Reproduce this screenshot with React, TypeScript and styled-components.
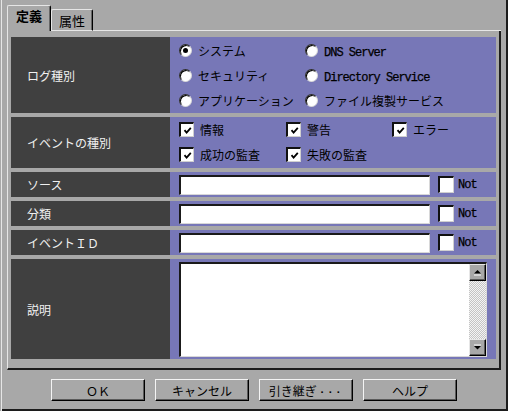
import React from "react";
import styled, { createGlobalStyle } from "styled-components";

const GRAY = "#a8a8a8";
const LIGHT = "#e6e6e6";
const DARK = "#1c1c1c";
const PURPLE = "#7777b7";
const LABEL_BG = "#404040";

const GlobalStyle = createGlobalStyle`
  html, body { margin: 0; padding: 0; background: ${GRAY}; }
  body {
    font-family: "Noto Sans CJK JP", "Noto Sans", sans-serif;
    font-size: 12px;
    color: #000;
  }
`;

const Window = styled.div`
  width: 508px;
  height: 411px;
  box-sizing: border-box;
  padding: 5px 7px 0 7px;
  background: ${GRAY};
  box-shadow: inset 1px 0 ${GRAY}, inset 2px 0 ${LIGHT}, inset -2px 0 ${DARK},
    inset 0 -2px ${DARK};
  display: flex;
  flex-direction: column;
`;

const TabStrip = styled.div`
  display: flex;
  align-items: flex-end;
  height: 26px;
`;

const Tab = styled.div<{ $active?: boolean; $w: number }>`
  box-sizing: border-box;
  width: ${(p) => p.$w}px;
  height: ${(p) => (p.$active ? 26 : 22)}px;
  border-top: 1px solid ${LIGHT};
  border-left: 1px solid ${LIGHT};
  border-right: 1px solid #000;
  border-bottom: ${(p) => (p.$active ? "none" : `1px solid ${LIGHT}`)};
  box-shadow: inset -1px 0 #666;
  border-radius: 2px 2px 0 0;
  display: flex;
  justify-content: center;
  align-items: ${(p) => (p.$active ? "flex-start" : "center")};
  padding-top: ${(p) => (p.$active ? 1 : 0)}px;
  font-size: 13px;
  line-height: 17px;
  font-weight: ${(p) => (p.$active ? 700 : 400)};
`;

const TabFiller = styled.div`
  flex: 1;
  height: 1px;
  background: ${LIGHT};
`;

const Panel = styled.div`
  border-left: 1px solid ${LIGHT};
  border-right: 2px solid ${DARK};
  border-bottom: 2px solid ${DARK};
  padding: 6px 3px 9px 3px;
`;

const Table = styled.div`
  display: grid;
  grid-template-columns: 159px 326px;
  grid-template-rows: 76px 51px 25px 25px 25px 100px;
  row-gap: 4px;
`;

const Label = styled.div`
  background: ${LABEL_BG};
  color: #f0f0f0;
  padding-left: 16px;
  display: flex;
  align-items: center;
  font-size: 12px;
`;

const Value = styled.div<{ $top?: number }>`
  background: ${PURPLE};
  padding-left: 9px;
  padding-top: ${(p) => p.$top ?? 0}px;
  display: flex;
  align-items: ${(p) => (p.$top !== undefined ? "flex-start" : "center")};
`;

const OptionGrid = styled.div<{ $cols: string }>`
  display: grid;
  grid-template-columns: ${(p) => p.$cols};
  grid-auto-rows: 25px;
  align-items: center;
`;

const Option = styled.label`
  display: flex;
  align-items: center;
  gap: 6px;
  white-space: nowrap;
  font-size: 12px;
`;

const Mono = styled.span`
  font-family: "Liberation Mono", "DejaVu Sans Mono", monospace;
  font-size: 12px;
  letter-spacing: -1px;
  font-weight: 400;
  -webkit-text-stroke: 0.25px #000;
`;

const RadioCircle = styled.span<{ $checked?: boolean }>`
  box-sizing: border-box;
  width: 13px;
  height: 13px;
  border-radius: 50%;
  background: #fff;
  border: 1px solid;
  border-color: #2a2a2a #d8d8d8 #d8d8d8 #2a2a2a;
  box-shadow: inset 1px 1px 0 #000;
  display: flex;
  align-items: center;
  justify-content: center;
  flex: none;
  &::after {
    content: "";
    display: ${(p) => (p.$checked ? "block" : "none")};
    width: 5px;
    height: 5px;
    border-radius: 50%;
    background: #000;
  }
`;

const CheckBox = styled.span<{ $size: number }>`
  box-sizing: border-box;
  width: ${(p) => p.$size}px;
  height: ${(p) => p.$size + (p.$size > 15 ? 1 : 0)}px;
  background: #fff;
  border-top: 2px solid #111;
  border-left: 2px solid #111;
  border-right: 1px solid #d0d0d0;
  border-bottom: 1px solid #d0d0d0;
  display: flex;
  align-items: center;
  justify-content: center;
  flex: none;
`;

const TextInput = styled.div`
  box-sizing: border-box;
  width: 251px;
  height: 20px;
  background: #fff;
  border-top: 2px solid #1a1a1a;
  border-left: 2px solid #1a1a1a;
  border-right: 1px solid #d8d8d8;
  border-bottom: 1px solid #d8d8d8;
  flex: none;
`;

const InputRow = styled.div`
  display: flex;
  align-items: center;
  gap: 8px;
`;

const NotOption = styled.label`
  display: flex;
  align-items: center;
  gap: 4px;
`;

const TextArea = styled.div`
  box-sizing: border-box;
  width: 308px;
  height: 95px;
  background: #fff;
  border-top: 2px solid #1a1a1a;
  border-left: 2px solid #1a1a1a;
  border-right: 1px solid #d8d8d8;
  border-bottom: 1px solid #d8d8d8;
  display: flex;
`;

const TextBody = styled.div`
  flex: 1;
`;

const ScrollBar = styled.div`
  width: 17px;
  display: flex;
  flex-direction: column;
`;

const ScrollButton = styled.div`
  box-sizing: border-box;
  height: 17px;
  background: ${GRAY};
  border-top: 1px solid ${LIGHT};
  border-left: 1px solid ${LIGHT};
  border-right: 1px solid #000;
  border-bottom: 1px solid #000;
  box-shadow: inset -1px -1px 0 #5a5a5a;
  display: flex;
  align-items: center;
  justify-content: center;
`;

const ScrollTrack = styled.div`
  flex: 1;
  background: repeating-conic-gradient(#c4c4c4 0 25%, #f4f4f4 0 50%) 0 0 / 2px
    2px;
`;

const ButtonRow = styled.div`
  display: flex;
  justify-content: center;
  gap: 10px;
  margin-top: 9px;
`;

const Button = styled.button`
  box-sizing: border-box;
  width: 94px;
  height: 22px;
  padding: 0;
  background: ${GRAY};
  border-top: 1px solid #f4f4f4;
  border-left: 1px solid #f4f4f4;
  border-right: 1px solid #000;
  border-bottom: 1px solid #000;
  box-shadow: inset -1px -1px 0 #5a5a5a;
  font-family: "Noto Sans CJK JP", "Noto Sans", sans-serif;
  font-size: 12px;
  color: #000;
  display: flex;
  align-items: center;
  justify-content: center;
`;

const ButtonMono = styled.span`
  font-family: "Liberation Mono", "DejaVu Sans Mono", monospace;
  font-size: 11px;
  font-weight: 700;
  letter-spacing: 1.5px;
  margin-left: 2px;
`;

const CheckMark = () => (
  <svg width="9" height="9" viewBox="0 0 9 9">
    <path d="M1.5 4.2 L3.6 6.6 L7.8 1.8" stroke="#000" strokeWidth="1.8" fill="none" />
  </svg>
);

const Radio = ({ checked, children }: { checked?: boolean; children: React.ReactNode }) => (
  <Option>
    <RadioCircle $checked={checked} />
    <span>{children}</span>
  </Option>
);

const Check = ({ children }: { children: React.ReactNode }) => (
  <Option>
    <CheckBox $size={15}>
      <CheckMark />
    </CheckBox>
    <span>{children}</span>
  </Option>
);

const FieldRow = () => (
  <InputRow>
    <TextInput />
    <NotOption>
      <CheckBox $size={16} />
      <Mono>Not</Mono>
    </NotOption>
  </InputRow>
);

export default function App() {
  return (
    <>
      <GlobalStyle />
      <Window>
        <TabStrip>
          <Tab $active $w={44}>定義</Tab>
          <Tab $w={42}>属性</Tab>
          <TabFiller />
        </TabStrip>
        <Panel>
          <Table>
            <Label>ログ種別</Label>
            <Value $top={1}>
              <OptionGrid $cols="126px auto">
                <Radio checked>システム</Radio>
                <Radio>
                  <Mono>DNS Server</Mono>
                </Radio>
                <Radio>セキュリティ</Radio>
                <Radio>
                  <Mono>Directory Service</Mono>
                </Radio>
                <Radio>アプリケーション</Radio>
                <Radio>ファイル複製サービス</Radio>
              </OptionGrid>
            </Value>

            <Label>イベントの種別</Label>
            <Value $top={0}>
              <OptionGrid $cols="107px 106px auto">
                <Check>情報</Check>
                <Check>警告</Check>
                <Check>エラー</Check>
                <Check>成功の監査</Check>
                <Check>失敗の監査</Check>
              </OptionGrid>
            </Value>

            <Label>ソース</Label>
            <Value>
              <FieldRow />
            </Value>

            <Label>分類</Label>
            <Value>
              <FieldRow />
            </Value>

            <Label>イベントＩＤ</Label>
            <Value>
              <FieldRow />
            </Value>

            <Label>説明</Label>
            <Value>
              <TextArea>
                <TextBody />
                <ScrollBar>
                  <ScrollButton>
                    <svg width="9" height="7" viewBox="0 0 9 7">
                      <path d="M4.5 1 L8 4.5 L1 4.5 Z" fill="#000" />
                      <rect x="1" y="5.5" width="7" height="1" fill="#fff" />
                    </svg>
                  </ScrollButton>
                  <ScrollTrack />
                  <ScrollButton>
                    <svg width="9" height="7" viewBox="0 0 9 7">
                      <path d="M1 2 L8 2 L4.5 5.5 Z" fill="#000" />
                      <rect x="1" y="0.5" width="7" height="1" fill="#fff" />
                    </svg>
                  </ScrollButton>
                </ScrollBar>
              </TextArea>
            </Value>
          </Table>
        </Panel>
        <ButtonRow>
          <Button>ＯＫ</Button>
          <Button>キャンセル</Button>
          <Button>
            引き継ぎ<ButtonMono>...</ButtonMono>
          </Button>
          <Button>ヘルプ</Button>
        </ButtonRow>
      </Window>
    </>
  );
}
